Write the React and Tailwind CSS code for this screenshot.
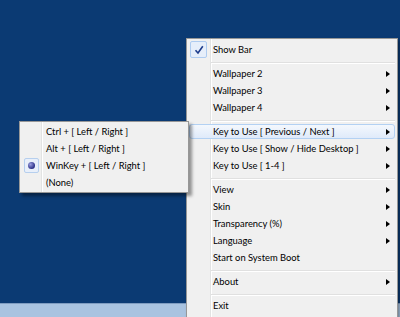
import React from 'react';

const mainItems = [
  { label: 'Show Bar', check: true },
  'sep',
  { label: 'Wallpaper 2', sub: true },
  { label: 'Wallpaper 3', sub: true },
  { label: 'Wallpaper 4', sub: true },
  'sep',
  { label: 'Key to Use [ Previous / Next ]', sub: true, active: true },
  { label: 'Key to Use [ Show / Hide Desktop ]', sub: true },
  { label: 'Key to Use [ 1-4 ]', sub: true },
  'sep',
  { label: 'View', sub: true },
  { label: 'Skin', sub: true },
  { label: 'Transparency (%)', sub: true },
  { label: 'Language', sub: true },
  { label: 'Start on System Boot' },
  'sep',
  { label: 'About', sub: true },
  'sep',
  { label: 'Exit' },
];

const subItems = [
  { label: 'Ctrl + [ Left / Right ]' },
  { label: 'Alt + [ Left / Right ]' },
  { label: 'WinKey + [ Left / Right ]', radio: true },
  { label: '(None)' },
];

const Arrow = () => (
  <span className="w-0 h-0 border-y-[3px] border-y-transparent border-l-[4px] border-l-black" />
);

const MenuRow = ({ item, gutter }) => (
  <div className="relative h-[17px] flex items-center">
    {item.active && (
      <div className="absolute inset-x-[2px] top-[1px] bottom-[1px] rounded-[3px] border border-[#b3d1f3] bg-gradient-to-b from-[#f4f8fd] to-[#dfeafa]" />
    )}
    <div className="relative flex items-center justify-center h-full" style={{ width: gutter }}>
      {item.check && (
        <div className="w-[17px] h-[17px] rounded-[2px] border border-[#aecbf0] bg-[#e6eefa] flex items-center justify-center">
          <svg width="10" height="10" viewBox="0 0 10 10">
            <path d="M1.5 5.2 L4 8 L8.8 1.2" fill="none" stroke="#1e3c8c" strokeWidth="1.6" />
          </svg>
        </div>
      )}
      {item.radio && (
        <div className="w-[15px] h-[15px] rounded-[2px] border border-[#b6cfee] bg-[#e8effa] flex items-center justify-center">
          <div className="w-[7px] h-[7px] rounded-full bg-[radial-gradient(circle_at_35%_35%,#9a9ee0,#2b2f86_70%)]" />
        </div>
      )}
    </div>
    <span className="relative flex-1 pl-[3px] mt-[2px] text-[9.4px] text-black whitespace-nowrap">{item.label}</span>
    {item.sub && (
      <span className="relative w-[11px] flex items-center">
        <Arrow />
      </span>
    )}
  </div>
);

const Separator = ({ gutter }) => (
  <div className="h-[7px] pt-[4px]" style={{ paddingLeft: gutter }}>
    <div className="h-[2px] mr-[2px] border-t border-[#e0e0e0] border-b border-b-white" />
  </div>
);

const App = () => {
  return (
    <div
      className="relative w-[400px] h-[317px] overflow-hidden flex flex-col"
      style={{ fontFamily: 'Lato, "Open Sans", sans-serif' }}
    >
      <div className="flex-1 bg-[#0b3a73]" />
      <div className="h-[14px] border-t border-[#7f9cc0] bg-[#a9c3e0]" />

      {/* main context menu */}
      <div className="absolute left-[186px] top-[38px] w-[212px] h-[281px] border border-[#979797] bg-[#f0f0f0] pt-[2px] shadow-[2px_2px_3px_rgba(0,0,0,0.35)] bg-[linear-gradient(to_right,transparent_23px,#e2e3e3_23px,#e2e3e3_24px,#ffffff_24px,#ffffff_25px,transparent_25px)]">
        {mainItems.map((item, i) =>
          item === 'sep' ? <Separator key={i} gutter={24} /> : <MenuRow key={i} item={item} gutter={23} />
        )}
      </div>

      {/* submenu */}
      <div className="absolute left-[19px] top-[121px] w-[170px] border border-[#979797] bg-[#f0f0f0] py-[1px] shadow-[3px_3px_3px_rgba(0,0,0,0.4)] bg-[linear-gradient(to_right,transparent_21px,#e2e3e3_21px,#e2e3e3_22px,#ffffff_22px,#ffffff_23px,transparent_23px)]">
        {subItems.map((item, i) => (
          <MenuRow key={i} item={item} gutter={23} />
        ))}
      </div>
    </div>
  );
};

export default App;
